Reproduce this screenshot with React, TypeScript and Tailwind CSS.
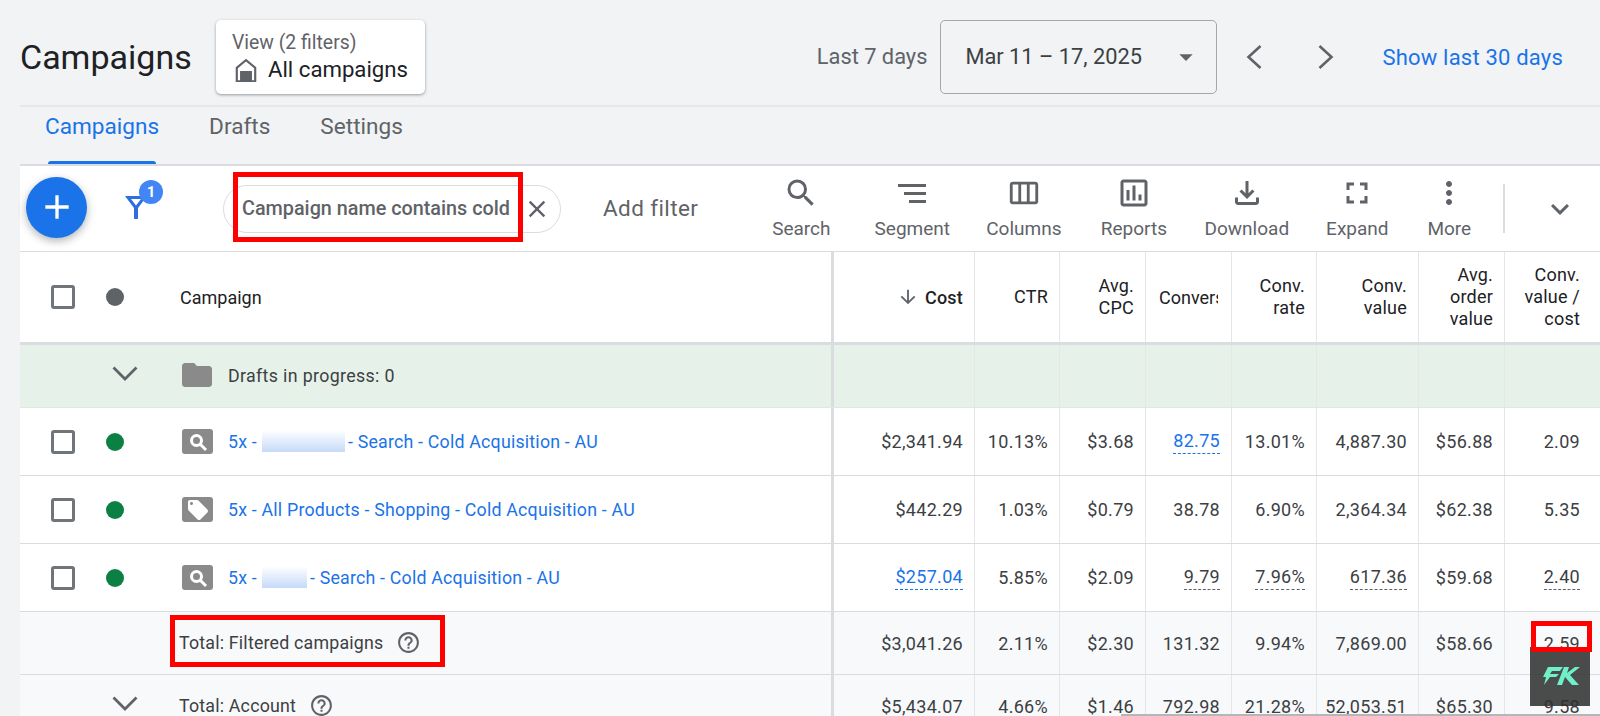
import type { ReactNode } from "react"
import {
  MdAdd,
  MdArrowDownward,
  MdArrowDropDown,
  MdClose,
  MdFolder,
  MdFullscreen,
  MdHelpOutline,
  MdKeyboardArrowDown,
  MdLocalOffer,
  MdMoreVert,
  MdOutlineAssessment,
  MdOutlineFileDownload,
  MdOutlineViewWeek,
  MdSearch,
} from "react-icons/md"

const gridCols = "grid grid-cols-[811px_3px_140px_85px_86px_86px_85px_102px_86px_96px]"

type Cell = { text: string; dashed?: boolean; link?: boolean }

function Checkbox() {
  return <span className="block w-6 h-6 border-[3px] border-[#70757a] rounded-[3px] bg-white" />
}

function Dot({ color }: { color: string }) {
  return <span className={`block w-[18px] h-[18px] rounded-full ${color}`} />
}

function TypeIcon({ kind }: { kind: "search" | "tag" }) {
  return (
    <span className="flex items-center justify-center w-[31px] h-[25px] rounded-[3px] bg-[#8a8a8a] text-white">
      {kind === "search" ? (
        <svg viewBox="0 0 20 20" className="w-5 h-5" fill="none" stroke="currentColor" strokeWidth="3">
          <circle cx="8.5" cy="8.5" r="5" />
          <path d="M12.5 12.5 18 18" />
        </svg>
      ) : (
        <MdLocalOffer className="w-6 h-6" />
      )}
    </span>
  )
}

function Blur({ w }: { w: string }) {
  return <span className={`inline-block h-[22px] ${w} ml-[5px] mr-[3px] align-[-4px] bg-linear-to-b from-white to-[#c6daf8]`} />
}

function ExpandArrow() {
  return (
    <svg viewBox="0 0 26 15" className="w-[26px] h-[15px] ml-[6px] -mt-[6px] text-[#5f6368]" fill="none" stroke="currentColor" strokeWidth="2.8">
      <path d="M1.5 1.5 13 13 24.5 1.5" />
    </svg>
  )
}

function Row({
  bg,
  height,
  left,
  cells,
  border = "border-b border-[#dadce0]",
}: {
  bg: string
  height: string
  left: ReactNode
  cells: (Cell | string)[]
  border?: string
}) {
  return (
    <div className={`${gridCols} ${bg} ${height} ${border}`}>
      <div className="flex items-center pl-[31px] text-[17.8px] tracking-[0.2px]">{left}</div>
      <div className="bg-[#dadce0]" />
      {cells.map((c, i) => {
        const cell: Cell = typeof c === "string" ? { text: c } : c
        return (
          <div
            key={i}
            className={`flex items-center justify-end text-[18px] tracking-[0.3px] text-[#3c4043] ${
              i === cells.length - 1 ? "pr-5" : "pr-[11px]"
            } ${i === 0 ? "" : "border-l border-[#e4e6e8]"}`}
          >
            <span
              className={`${cell.dashed ? "border-b border-dashed leading-[24px]" : ""} ${
                cell.link ? "text-[#1a73e8] border-[#1a73e8]" : "border-[#5f6368]"
              }`}
            >
              {cell.text}
            </span>
          </div>
        )
      })}
    </div>
  )
}

function Campaign({ kind, children }: { kind: "search" | "tag"; children: ReactNode }) {
  return (
    <>
      <span className="w-[55px]">
        <Checkbox />
      </span>
      <span className="w-[76px]">
        <Dot color="bg-[#0b8043]" />
      </span>
      <TypeIcon kind={kind} />
      <span className="ml-[15px] mt-[1px] text-[#1a73e8] whitespace-nowrap">{children}</span>
    </>
  )
}

function ToolItem({ icon, label, width }: { icon: ReactNode; label: string; width: string }) {
  return (
    <div className={`flex flex-col items-center ${width}`}>
      <div className="h-[36px] flex items-center justify-center text-[#5f6368]">{icon}</div>
      <span className="mt-[4px] text-[19px] text-[#5f6368] whitespace-nowrap">{label}</span>
    </div>
  )
}

function HeaderCell({ lines, last }: { lines: string[]; last?: boolean }) {
  return (
    <div
      className={`flex flex-col justify-center items-end border-l border-[#e4e6e8] text-[18px] leading-[22px] tracking-[0.2px] text-[#202124] ${
        last ? "pr-5" : "pr-[11px]"
      }`}
    >
      {lines.map((l) => (
        <span key={l}>{l}</span>
      ))}
    </div>
  )
}

function Chevron({ dir }: { dir: "left" | "right" }) {
  return (
    <span className="flex items-center justify-center w-[38px] h-[38px] text-[#5f6368]">
      <svg viewBox="0 0 16 24" className="w-4 h-6" fill="none" stroke="currentColor" strokeWidth="2.6">
        <path d={dir === "left" ? "M14.5 1 2.5 12l12 11" : "M1.5 1l12 11-12 11"} />
      </svg>
    </span>
  )
}

export default function App() {
  return (
    <div className="relative h-[716px] w-[1600px] overflow-hidden bg-[#f1f3f4] pl-5 font-['Roboto',sans-serif]">
      <header className="flex items-start h-[107px] pt-5 border-b-2 border-[#e6e7e9]">
        <h1 className="mt-[20px] text-[34px] leading-none text-[#202124] w-[196px]">Campaigns</h1>
        <div className="w-[209px] h-[74px] rounded-[5px] bg-white shadow-[0_1px_3px_rgba(60,64,67,0.5)] pl-4 pt-[10px]">
          <div className="text-[19.4px] leading-[26px] text-[#5f6368]">View (2 filters)</div>
          <div className="flex items-center gap-[9px] text-[22.2px] leading-[27px] text-[#202124]">
            <svg viewBox="0 0 24 24" className="w-[26px] h-[26px] ml-[1px] text-[#5f6368]" fill="currentColor">
              <path fillRule="evenodd" d="M12 1.5 2.5 9.5V23h19V9.5L12 1.5Zm0 2.6 7.5 6.3V21.5h-2V13h-11v8.5h-2V10.4L12 4.1Z" />
            </svg>
            All campaigns
          </div>
        </div>
        <div className="ml-auto flex items-center pr-[37px]">
          <span className="text-[21.8px] mt-[1px] text-[#5f6368] mr-[13px]">Last 7 days</span>
          <div className="flex items-center w-[277px] h-[74px] border border-[#a5a8ab] rounded-[5px] pl-6 pr-[14px]">
            <span className="text-[21.8px] mt-[1px] text-[#3c4043] whitespace-nowrap">Mar 11 – 17, 2025</span>
            <MdArrowDropDown className="ml-auto w-8 h-8 text-[#5f6368]" />
          </div>
          <span className="ml-[18px]">
            <Chevron dir="left" />
          </span>
          <span className="ml-[34px]">
            <Chevron dir="right" />
          </span>
          <span className="ml-[37px] mt-[1px] text-[22px] tracking-[0.2px] font-[450] text-[#1a73e8] whitespace-nowrap">
            Show last 30 days
          </span>
        </div>
      </header>

      <nav className="flex h-[59px] gap-[50px] pl-[25px] text-[22.6px] text-[#5f6368] border-b-2 border-[#dadce0]">
        <div className="relative pt-[3px] text-[#1a73e8] font-[450]">
          Campaigns
          <span className="absolute bottom-0 left-[3px] right-[3px] h-[3px] bg-[#1a73e8] rounded-t-[3px]" />
        </div>
        <div className="pt-[3px] font-[450]">Drafts</div>
        <div className="pt-[3px] font-[450]">Settings</div>
      </nav>

      <div className="flex items-center h-[86px] bg-white border-b border-[#dadce0]">
        <div className="flex items-center justify-center ml-[6px] mb-[3px] w-[61px] h-[61px] rounded-full bg-[#1a73e8] text-white shadow-[0_3px_8px_rgba(60,64,67,0.4)]">
          <MdAdd className="w-10 h-10" />
        </div>
        <div className="relative ml-[37px] mb-[3px] w-[24px] h-[26px]">
          <svg viewBox="0 0 24 26" className="w-[24px] h-[26px] text-[#2f6fdc]" fill="currentColor">
            <path d="M1 2h22L14 14v11h-4V14L1 2Zm6 3 5 6.5L17 5H7Z" />
          </svg>
          <span className="absolute -top-[14px] left-[15px] flex items-center justify-center w-6 h-6 rounded-full bg-[#4285f4] text-white text-[15px] font-bold">
            1
          </span>
        </div>
        <div className="flex items-center ml-[75px] w-[338px] h-[48px] rounded-full border border-[#dadce0] pl-[18px] whitespace-nowrap">
          <span className="text-[19.8px] font-medium text-[#5f6368]">Campaign name contains cold</span>
          <MdClose className="ml-[13px] w-7 h-7 text-[#5f6368]" />
        </div>
        <span className="ml-[42px] text-[22.5px] font-[450] tracking-[0.4px] text-[#5f6368] whitespace-nowrap">Add filter</span>
        <div className="ml-[48px] mt-[2px] flex items-start">
          <ToolItem width="w-[110px]" label="Search" icon={<MdSearch className="w-9 h-9" />} />
          <ToolItem
            width="w-[112px]"
            label="Segment"
            icon={
              <svg viewBox="0 0 30 24" className="w-[30px] h-6" fill="currentColor">
                <path d="M1 3h28v3H1zM7 11h22v3H7zM12 19h17v3H12z" />
              </svg>
            }
          />
          <ToolItem width="w-[111px]" label="Columns" icon={<MdOutlineViewWeek className="w-[34px] h-9" />} />
          <ToolItem width="w-[109px]" label="Reports" icon={<MdOutlineAssessment className="w-9 h-9" />} />
          <ToolItem width="w-[117px]" label="Download" icon={<MdOutlineFileDownload className="w-9 h-9" />} />
          <ToolItem width="w-[104px]" label="Expand" icon={<MdFullscreen className="w-9 h-9" />} />
          <ToolItem width="w-[80px]" label="More" icon={<MdMoreVert className="w-9 h-9" />} />
        </div>
        <div className="ml-[14px] w-[2px] h-[49px] bg-[#dadce0]" />
        <MdKeyboardArrowDown className="ml-[37px] w-9 h-9 text-[#5f6368]" />
      </div>

      <div className={`${gridCols} h-[93px] bg-white border-b-[3px] border-[#dadce0]`}>
        <div className="flex items-center pl-[31px]">
          <span className="w-[55px]">
            <Checkbox />
          </span>
          <span className="w-[74px]">
            <Dot color="bg-[#5f6368]" />
          </span>
          <span className="text-[18px] text-[#202124]">Campaign</span>
        </div>
        <div className="bg-[#dadce0]" />
        <div className="flex items-center justify-end pr-[11px] text-[18px] font-medium tracking-[0.2px] text-[#202124]">
          <MdArrowDownward className="w-[22px] h-[22px] mr-[6px] text-[#5f6368]" />
          Cost
        </div>
        <HeaderCell lines={["CTR"]} />
        <HeaderCell lines={["Avg.", "CPC"]} />
        <div className="flex items-center border-l border-[#e4e6e8] pl-[13px] text-[18px] text-[#202124]">
          <span className="block w-[59px] overflow-hidden whitespace-nowrap">Conversions</span>
        </div>
        <HeaderCell lines={["Conv.", "rate"]} />
        <HeaderCell lines={["Conv.", "value"]} />
        <HeaderCell lines={["Avg.", "order", "value"]} />
        <HeaderCell lines={["Conv.", "value /", "cost"]} last />
      </div>

      <Row
        bg="bg-[#e6f2e9]"
        height="h-[63px]"
        border="border-b border-[#dfe8e2]"
        left={
          <>
            <span className="w-[55px]" />
            <span className="w-[76px]">
              <ExpandArrow />
            </span>
            <MdFolder className="w-[36px] h-[36px] -ml-[3px] -mt-[2px] text-[#8a8a8a]" />
            <span className="ml-[13px] tracking-[0.35px] text-[#3c4043]">Drafts in progress: 0</span>
          </>
        }
        cells={["", "", "", "", "", "", "", ""]}
      />
      <Row
        bg="bg-white"
        height="h-[68px]"
        left={
          <Campaign kind="search">
            5x -<Blur w="w-[83px]" />- Search - Cold Acquisition - AU
          </Campaign>
        }
        cells={["$2,341.94", "10.13%", "$3.68", { text: "82.75", dashed: true, link: true }, "13.01%", "4,887.30", "$56.88", "2.09"]}
      />
      <Row
        bg="bg-white"
        height="h-[68px]"
        left={<Campaign kind="tag">5x - All Products - Shopping - Cold Acquisition - AU</Campaign>}
        cells={["$442.29", "1.03%", "$0.79", "38.78", "6.90%", "2,364.34", "$62.38", "5.35"]}
      />
      <Row
        bg="bg-white"
        height="h-[68px]"
        left={
          <Campaign kind="search">
            5x -<Blur w="w-[45px]" />- Search - Cold Acquisition - AU
          </Campaign>
        }
        cells={[
          { text: "$257.04", dashed: true, link: true },
          "5.85%",
          "$2.09",
          { text: "9.79", dashed: true },
          { text: "7.96%", dashed: true },
          { text: "617.36", dashed: true },
          "$59.68",
          { text: "2.40", dashed: true },
        ]}
      />
      <Row
        bg="bg-[#f8f9fa]"
        height="h-[63px]"
        left={
          <>
            <span className="w-[128px]" />
            <span className="text-[#3c4043]">Total: Filtered campaigns</span>
            <MdHelpOutline className="ml-[13px] -mt-[2px] w-[25px] h-[25px] text-[#5f6368]" />
          </>
        }
        cells={["$3,041.26", "2.11%", "$2.30", "131.32", "9.94%", "7,869.00", "$58.66", "2.59"]}
      />
      <Row
        bg="bg-[#f8f9fa]"
        height="h-[62px]"
        border=""
        left={
          <>
            <span className="w-[55px]" />
            <span className="w-[73px]">
              <ExpandArrow />
            </span>
            <span className="text-[#3c4043]">Total: Account</span>
            <MdHelpOutline className="ml-[13px] -mt-[2px] w-[25px] h-[25px] text-[#5f6368]" />
          </>
        }
        cells={["$5,434.07", "4.66%", "$1.46", "792.98", "21.28%", "52,053.51", "$65.30", "9.58"]}
      />

      {/* scrollbar */}
      <div className="absolute left-[1121px] right-0 bottom-0 h-[2px] bg-[#b4b6b9]" />

      {/* watermark */}
      <div className="absolute left-[1530px] top-[647px] w-[60px] h-[59px] bg-[#303030]/[0.87] flex items-center justify-center">
        <svg viewBox="0 0 37 18" className="w-[37px] h-[18px] ml-[3px] -mt-[2px]" fill="#6ff0c8">
          <path d="M5 0H20L17 4H9L7 7H16L13 10H7L1 18L3 10H0Z" />
          <path d="M21 0H26L24 6L32 0H37L27 8L36 18H29L22 10L19 18H14Z" />
        </svg>
      </div>

      {/* annotation boxes */}
      <div className="absolute left-[233px] top-[172px] w-[290px] h-[70px] border-[5px] border-[#ff0000]" />
      <div className="absolute left-[170px] top-[615px] w-[275px] h-[52px] border-[5px] border-[#ff0000]" />
      <div className="absolute left-[1531px] top-[621px] w-[61px] h-[31px] border-[5px] border-[#ff0000]" />
    </div>
  )
}
